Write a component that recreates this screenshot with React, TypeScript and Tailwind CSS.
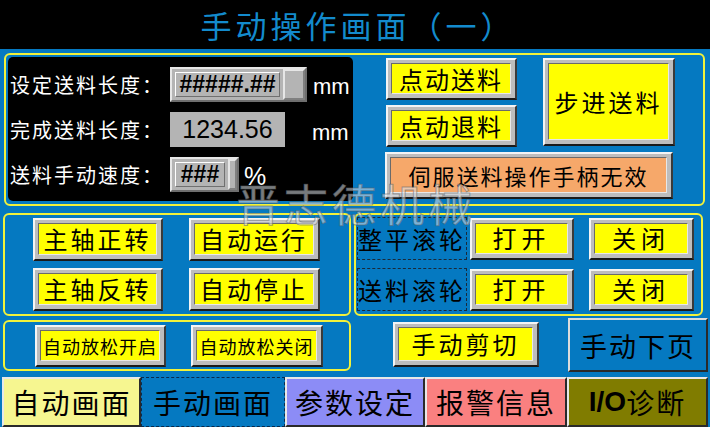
import React from "react";

type BtnProps = {
  children: React.ReactNode;
  className?: string;
  face?: string;
};

// bevelled HMI button: grey frame, coloured face
const Btn: React.FC<BtnProps> = ({ children, className = "", face = "bg-[#ffff00]" }) => (
  <div
    className={`flex border-2 border-t-[#f4f4f4] border-l-[#f4f4f4] border-r-[#3a3a3a] border-b-[#1a1a1a] bg-[#bdbdbd] pt-[3px] pl-[3px] pr-[4px] pb-[4px] ${className}`}
  >
    <div
      className={`flex flex-1 items-center justify-center border border-t-[#6a6a6a] border-l-[#6a6a6a] border-r-[#e8e8e8] border-b-[#e8e8e8] text-black leading-none whitespace-nowrap ${face}`}
    >
      {children}
    </div>
  </div>
);

const Tab: React.FC<BtnProps> = ({ children, className = "", face = "" }) => (
  <div
    className={`flex h-[50px] items-center justify-center border-2 border-t-[#e8e8e8] border-l-[#e8e8e8] border-r-[#2a2a2a] border-b-[#2a2a2a] text-[28px] tracking-[2px] text-black leading-none whitespace-nowrap ${face} ${className}`}
  >
    {children}
  </div>
);

// numeric entry box with the little slider thumb on the right
const Entry: React.FC<{ text: string; w: string; thumb: string }> = ({ text, w, thumb }) => (
  <div className={`flex h-[35px] border-2 border-t-[#e6e6e6] border-l-[#e6e6e6] border-r-[#6e6e6e] border-b-[#6e6e6e] bg-[#b4b4b4] ${w}`}>
    <div className="m-[3px] flex flex-1 items-center justify-center border border-t-white border-l-white border-r-[#707070] border-b-[#707070] font-['Liberation_Sans',sans-serif] text-[23px] font-bold text-black leading-none">
      {text}
    </div>
    <div className={`border-2 border-t-[#e6e6e6] border-l-[#e6e6e6] border-r-[#808080] border-b-[#808080] bg-[#b4b4b4] ${thumb}`} />
  </div>
);

const Label: React.FC<{ children: React.ReactNode }> = ({ children }) => (
  <div className="w-[160px] whitespace-nowrap text-[20px] tracking-[2px] text-white leading-none">{children}</div>
);

export default function App() {
  return (
    <div className="relative flex h-[427px] w-[710px] flex-col overflow-hidden bg-[#0579c1] font-['Noto_Sans_CJK_SC',sans-serif]">
      {/* title */}
      <div className="flex h-[49px] shrink-0 items-center justify-center bg-black pl-[6px] text-[31px] tracking-[4px] text-[#138bcd] leading-none">
        手动操作画面（一）
      </div>

      {/* top panel */}
      <div className="ml-[4px] mt-[4px] flex h-[153px] w-[701px] shrink-0 rounded-[6px] border-2 border-[#f2f23a]">
        <div className="ml-[2px] mt-[2px] flex h-[144px] w-[345px] flex-col gap-[10px] rounded-[5px] bg-black pl-[2px] pt-[10px]">
          <div className="flex h-[35px] items-center">
            <Label>设定送料长度：</Label>
            <Entry text="#####.##" w="w-[137px]" thumb="w-[22px]" />
            <span className="ml-[6px] mt-[4px] font-['Liberation_Sans',sans-serif] text-[22px] text-white">mm</span>
          </div>
          <div className="flex h-[35px] items-center">
            <Label>完成送料长度：</Label>
            <div className="flex h-[35px] w-[115px] items-center justify-center bg-[#b4b4b4] font-['Liberation_Sans',sans-serif] text-[25px] text-black leading-none">
              1234.56
            </div>
            <span className="ml-[27px] mt-[6px] font-['Liberation_Sans',sans-serif] text-[22px] text-white">mm</span>
          </div>
          <div className="flex h-[35px] items-center">
            <Label>送料手动速度：</Label>
            <Entry text="###" w="w-[69px]" thumb="w-[9px]" />
            <span className="ml-[5px] mt-[4px] font-['Liberation_Sans',sans-serif] text-[25px] text-white">%</span>
          </div>
        </div>

        <div className="ml-[33px] mt-[3px] flex flex-col">
          <div className="flex">
            <div className="flex flex-col gap-[5px]">
              <Btn className="h-[42px] w-[131px] text-[24px] tracking-[2px]">点动送料</Btn>
              <Btn className="h-[42px] w-[131px] text-[24px] tracking-[2px]">点动退料</Btn>
            </div>
            <Btn className="ml-[26px] h-[88px] w-[132px] text-[24px] tracking-[3px]">步进送料</Btn>
          </div>
          <Btn className="-ml-[1px] mt-[5px] h-[47px] w-[288px] text-[22px] tracking-[2px]" face="bg-[#f6a86a]">
            伺服送料操作手柄无效
          </Btn>
        </div>
      </div>

      {/* middle panels */}
      <div className="mt-[7px] flex shrink-0">
        <div className="ml-[3px] h-[103px] w-[348px] rounded-[6px] border-2 border-[#f2f23a] pl-[28px] pt-[3px]">
          <div className="grid grid-cols-[130px_131px] gap-x-[26px] gap-y-[7px]">
            <Btn className="h-[43px] text-[24px] tracking-[3px]">主轴正转</Btn>
            <Btn className="h-[43px] text-[24px] tracking-[3px]">自动运行</Btn>
            <Btn className="h-[43px] text-[24px] tracking-[3px]">主轴反转</Btn>
            <Btn className="h-[43px] text-[24px] tracking-[3px]">自动停止</Btn>
          </div>
        </div>
        <div className="ml-[3px] flex h-[103px] w-[349px] flex-col gap-[8px] rounded-[6px] border-2 border-[#f2f23a] pl-[1px] pt-[2px]">
          {["整平滚轮", "送料滚轮"].map((name) => (
            <div key={name} className="flex h-[43px] items-center">
              <div className="flex h-[43px] w-[110px] items-center border border-dashed border-[#1a2a3a] text-[24px] tracking-[3px] text-black leading-none whitespace-nowrap">
                {name}
              </div>
              <Btn className="ml-[3px] h-[42px] w-[104px] text-[24px] tracking-[5px]">打开</Btn>
              <Btn className="ml-[15px] h-[42px] w-[105px] text-[24px] tracking-[5px]">关闭</Btn>
            </div>
          ))}
        </div>
      </div>

      {/* lower row */}
      <div className="mt-[2px] flex h-[54px] shrink-0 items-start">
        <div className="ml-[3px] mt-[2px] flex h-[51px] w-[348px] gap-[25px] rounded-[6px] border-2 border-[#f2f23a] pl-[30px] pt-[3px]">
          <Btn className="h-[42px] w-[131px] text-[18px] tracking-[1px]">自动放松开启</Btn>
          <Btn className="h-[42px] w-[132px] text-[18px] tracking-[1px]">自动放松关闭</Btn>
        </div>
        <Btn className="ml-[42px] mt-[4px] h-[45px] w-[146px] text-[24px] tracking-[3px]">手动剪切</Btn>
        <div className="ml-[29px] flex h-[54px] w-[140px] items-center justify-center border-2 border-t-[#dcdcdc] border-l-[#dcdcdc] border-r-[#2a2a2a] border-b-[#2a2a2a] text-[27px] tracking-[2px] text-black leading-none">
          手动下页
        </div>
      </div>

      {/* bottom tabs */}
      <div className="ml-[2px] mt-[5px] flex shrink-0">
        <Tab className="w-[139px]" face="bg-[#f6f690]">自动画面</Tab>
        <Tab className="w-[144px] !border !border-dashed !border-[#0a2a4a]" face="bg-[#0579c1]">手动画面</Tab>
        <Tab className="w-[140px]" face="bg-[#8c8cf6]">参数设定</Tab>
        <Tab className="w-[142px]" face="bg-[#fa8080]">报警信息</Tab>
        <Tab className="w-[141px]" face="bg-[#807c00]">
          <span className="font-['Liberation_Sans',sans-serif] font-bold tracking-[0px]">I/O</span>
          <span>诊断</span>
        </Tab>
      </div>

      {/* watermark over the panels */}
      <div className="pointer-events-none absolute left-[236px] top-[181px] text-[44px] tracking-[4px] text-[rgba(225,230,236,0.55)] leading-none [-webkit-text-stroke:1px_rgba(90,95,100,0.55)]">
        晋志德机械
      </div>
    </div>
  );
}
